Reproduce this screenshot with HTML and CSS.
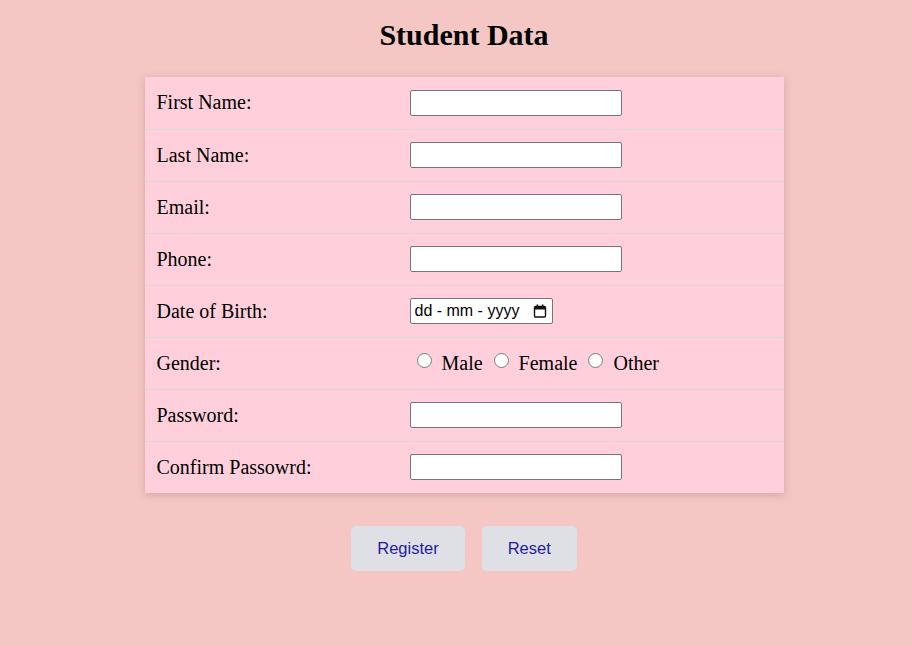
FILE: index.html
```html
<!DOCTYPE html>
<html>
<head>
<meta charset="utf-8">
<title>Student Data</title>
<link rel="stylesheet" href="styles.css">
</head>
<body>
<div class="page">
  <h1 class="title">Student Data</h1>
  <form class="form">
    <table class="grid">
      <tr><td class="lbl">First Name:</td><td><input class="field" type="text"></td></tr>
      <tr><td class="lbl">Last Name:</td><td><input class="field" type="text"></td></tr>
      <tr><td class="lbl">Email:</td><td><input class="field" type="text"></td></tr>
      <tr><td class="lbl">Phone:</td><td><input class="field" type="text"></td></tr>
      <tr><td class="lbl">Date of Birth:</td><td>
        <span class="datewrap">
          <input class="date" type="text" placeholder="dd - mm - yyyy">
          <svg class="cal" width="14" height="14" viewBox="0 0 14 14" aria-hidden="true">
            <rect x="1.5" y="2.5" width="11" height="10.5" rx="1.2" fill="none" stroke="#111" stroke-width="1.4"/>
            <rect x="1.5" y="2.5" width="11" height="3" fill="#111"/>
            <rect x="3.6" y="0.5" width="1.6" height="2.5" fill="#111"/>
            <rect x="8.8" y="0.5" width="1.6" height="2.5" fill="#111"/>
          </svg>
        </span>
      </td></tr>
      <tr><td class="lbl">Gender:</td><td class="radios"><input type="radio" name="g" class="radio"><span class="opt">Male</span><input type="radio" name="g" class="radio"><span class="opt">Female</span><input type="radio" name="g" class="radio"><span class="opt">Other</span></td></tr>
      <tr><td class="lbl">Password:</td><td><input class="field" type="password"></td></tr>
      <tr><td class="lbl">Confirm Passowrd:</td><td><input class="field" type="password"></td></tr>
    </table>
    <div class="actions">
      <button type="submit" class="btn">Register</button>
      <button type="reset" class="btn">Reset</button>
    </div>
  </form>
</div>
</body>
</html>
```
FILE: styles.css
```css
html, body {
  margin: 0;
  padding: 0;
  background: #f4c7c4;
}
.page {
  padding: 0 0 0 16px;
  font-family: "Liberation Serif", "Times New Roman", serif;
  color: #000;
}
.title {
  margin: 0;
  padding-top: 17px;
  text-align: center;
  font-size: 30px;
  font-weight: bold;
  line-height: 36px;
}
.form {
  margin-top: 24px;
}
.grid {
  width: 639px;
  margin: 0 auto;
  border-collapse: collapse;
  background: #ffd0dc;
  box-shadow: 0 2px 8px rgba(120, 60, 60, 0.25);
}
.grid td {
  height: 52px;
  padding: 0 12px;
  border-bottom: 1px solid #ddd6d8;
  font-size: 20px;
  vertical-align: middle;
  box-sizing: border-box;
}
.grid tr:last-child td {
  border-bottom: none;
}
.grid td.lbl {
  width: 253px;
}
.field {
  box-sizing: border-box;
  width: 212px;
  height: 26px;
  margin: 0;
  border: 1px solid #767676;
  border-radius: 2px;
  background: #fff;
  display: block;
}
.datewrap {
  position: relative;
  display: block;
  width: 143px;
  height: 26px;
}
.date {
  box-sizing: border-box;
  width: 143px;
  height: 26px;
  margin: 0;
  padding: 0 24px 0 4px;
  border: 1px solid #767676;
  border-radius: 2px;
  background: #fff;
  font-family: "Liberation Sans", Arial, sans-serif;
  font-size: 16px;
  display: block;
}
.date::placeholder {
  color: #000;
  opacity: 1;
}
.cal {
  position: absolute;
  right: 6px;
  top: 6px;
  pointer-events: none;
}
.radios {
  white-space: nowrap;
}
.radio {
  width: 15px;
  height: 15px;
  margin: 0 0 0 7px;
  vertical-align: 2px;
}
.opt {
  margin-left: 10px;
}
.opt + .radio {
  margin-left: 11px;
}
.actions {
  display: flex;
  justify-content: center;
  gap: 17px;
  margin-top: 33px;
}
.btn {
  height: 45px;
  padding: 0 26px;
  border: none;
  border-radius: 5px;
  background: #dfdfe6;
  color: #1e1e9e;
  font-family: "Liberation Sans", Arial, sans-serif;
  font-size: 16.5px;
}
```
